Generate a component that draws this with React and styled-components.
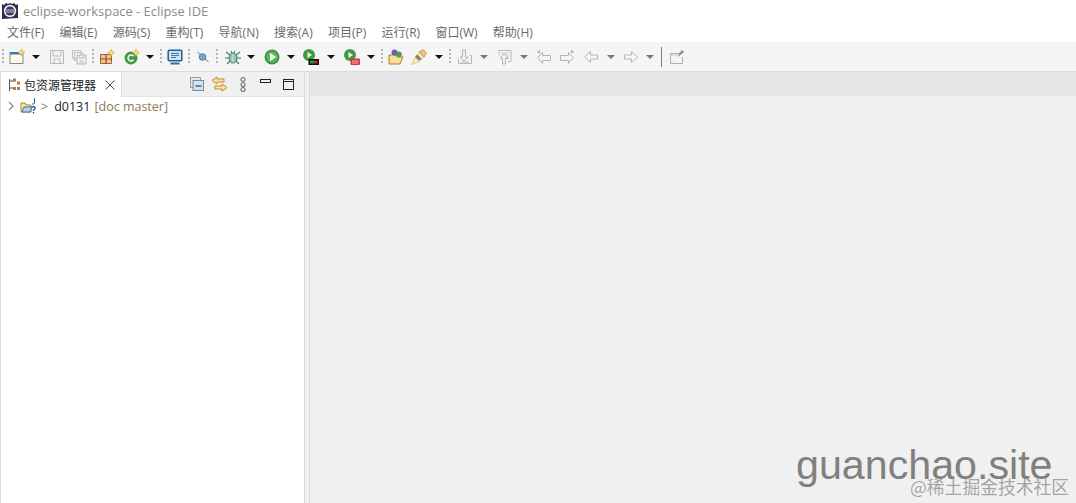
import React from 'react';
import styled, { createGlobalStyle } from 'styled-components';

const GlobalStyle = createGlobalStyle`
  html, body { margin: 0; padding: 0; height: 100%; overflow: hidden; background: #f0f0f0; }
  #root { height: 100%; }
`;

const Window = styled.div`
  position: relative;
  width: 1076px;
  height: 503px;
  display: flex;
  flex-flow: column;
  overflow: hidden;
  font-family: "Open Sans", "Noto Sans CJK SC", sans-serif;
  font-size: 12px;
`;

const TitleBar = styled.div`
  height: 22px;
  background: #fff;
  display: flex;
  align-items: center;
  padding-left: 2px;
  gap: 5px;
  color: #8a8a8a;
  font-size: 12.9px;
`;

const MenuBar = styled.div`
  height: 20px;
  box-sizing: border-box;
  background: #fff;
  display: flex;
  align-items: center;
  padding-left: 7px;
  gap: 15.3px;
  color: #6a6a6a;
  font-family: "Open Sans", "Noto Sans CJK SC", sans-serif;
`;

const Toolbar = styled.div`
  height: 30px;
  padding-top: 1px;
  box-sizing: border-box;
  background: #f5f5f5;
  border-bottom: 1px solid #dcdcdc;
  display: flex;
  align-items: center;
`;

const Slot = styled.div`
  flex: none;
  width: ${p => p.$w}px;
  margin-left: ${p => p.$ml}px;
  display: flex;
  justify-content: center;
  align-items: center;
`;

const Grip = styled.div`
  width: 2px;
  height: 16px;
  background: repeating-linear-gradient(to bottom, #b4b4b4 0 2px, transparent 2px 4px);
`;

const Separator = styled.div`
  width: 1px;
  height: 20px;
  background: #808080;
`;

const Caret = styled.div`
  width: 0;
  height: 0;
  border-left: 4px solid transparent;
  border-right: 4px solid transparent;
  border-top: 4px solid ${p => (p.$dim ? '#777' : '#111')};
`;

const Workbench = styled.div`
  flex: 1;
  display: flex;
  min-height: 0;
`;

const LeftPane = styled.div`
  width: 305px;
  box-sizing: border-box;
  background: #fff;
  border-left: 1px solid #d8d8d8;
  border-right: 1px solid #d8d8d8;
  display: flex;
  flex-flow: column;
`;

const PaneHeader = styled.div`
  height: 25px;
  box-sizing: border-box;
  background: #f0f0f0;
  border-bottom: 1px solid #e4e4e4;
  display: flex;
`;

const Tab = styled.div`
  width: 121px;
  height: 25px;
  box-sizing: border-box;
  background: #fff;
  border-right: 1px solid #dcdcdc;
  display: flex;
  align-items: center;
  padding-left: 7px;
  color: #222;
  font-family: "Noto Sans CJK SC", sans-serif;
`;

const TabLabel = styled.span`
  margin-left: 4px;
  margin-right: 9px;
`;

const PaneTools = styled.div`
  flex: 1;
  display: flex;
  align-items: center;
  padding-left: 67px;
`;

const PaneTool = styled.div`
  width: ${p => p.$w}px;
  display: flex;
  justify-content: center;
  margin-top: ${p => p.$up ? -5 : 0}px;
`;

const TreeRow = styled.div`
  height: 18px;
  display: flex;
  align-items: center;
  padding-left: 6px;
  font-size: 12.5px;
`;

const TreeIcon = styled.span`
  display: flex;
  margin-left: 5px;
`;

const Decorator = styled.span`
  color: #8a7a4e;
  margin-left: 4px;
`;

const Prefix = styled.span`
  color: #8a7a4e;
  margin: 0 6px 0 4px;
`;

const Project = styled.span`
  color: #222;
`;

const Gutter = styled.div`
  width: 4px;
  background: #f0f0f0;
`;

const EditorArea = styled.div`
  flex: 1;
  display: flex;
  flex-flow: column;
  background: #f0f0f0;
  border-left: 1px solid #dcdcdc;
`;

const EditorHeader = styled.div`
  height: 24px;
  background: #e6e6e6;
`;

const SiteMark = styled.div`
  position: absolute;
  left: 796px;
  top: 441px;
  font-family: "Liberation Sans", sans-serif;
  font-size: 41.2px;
  line-height: 48px;
  color: #808080;
`;

const JuejinMark = styled.div`
  position: absolute;
  left: 910px;
  top: 475px;
  font-family: "Noto Sans CJK SC", sans-serif;
  font-size: 17.8px;
  line-height: 22px;
  color: rgba(130, 130, 130, 0.7);
`;

const S = ({ children, size = 16 }) => (
  <svg width={size} height={size} viewBox="0 0 16 16" fill="none">{children}</svg>
);

const Star = ({ x, y, c = '#f8de7c' }) => (
  <path d={`M${x} ${y - 3.5}l1.2 2.3 2.3 1.2-2.3 1.2-1.2 2.3-1.2-2.3-2.3-1.2 2.3-1.2z`} fill={c} stroke="#c9a227" strokeWidth=".6" />
);

const NewIcon = () => (
  <S>
    <rect x="1" y="3.5" width="13" height="11" fill="#fffbe8" stroke="#7d8a9a" />
    <rect x="1" y="3" width="13" height="2.5" fill="#3f78b5" />
    <Star x={12.5} y={3.5} />
  </S>
);
const SaveIcon = () => (
  <S>
    <path d="M1.5 1.5h13v13h-13z" fill="#f2f2f2" stroke="#b8b8b8" />
    <path d="M4 2v5h8V2M5 14v-4h6v4" stroke="#bcbcbc" />
  </S>
);
const SaveAllIcon = () => (
  <S>
    <path d="M1.5 1.5h8v8h-8zM3.5 3.5h8v8h-8z" fill="#f2f2f2" stroke="#c0c0c0" />
    <path d="M6 6h9v9H6z" fill="#f2f2f2" stroke="#b8b8b8" />
    <path d="M8 6v3h5V6M9 15v-3h3v3" stroke="#bcbcbc" />
  </S>
);
const PackageIcon = () => (
  <S>
    <path d="M1.5 5.5h11v9h-11z" fill="#edc79a" stroke="#a8642c" />
    <path d="M7 5v10M1 10h12" stroke="#8a4f20" strokeWidth="1.2" />
    <Star x={12} y={3.8} />
  </S>
);
const NewClassIcon = () => (
  <S>
    <circle cx="7" cy="9" r="6.5" fill="#3f9a45" />
    <path d="M9.5 7.2a3 3 0 1 0 0 3.6" stroke="#fff" strokeWidth="1.6" />
    <Star x={12} y={3.8} />
  </S>
);
const MonitorIcon = () => (
  <S>
    <rect x="1.2" y="1.2" width="13.6" height="10.6" rx="1" fill="#cfe2f2" stroke="#24608f" strokeWidth="1.5" />
    <path d="M4 4.5h8M4 6.5h8M4 8.5h5" stroke="#3d7cab" />
    <path d="M3.5 14.5h9" stroke="#2f6fa8" strokeWidth="2" />
  </S>
);
const SearchIcon = () => (
  <S>
    <path d="M2.5 3l11 10" stroke="#9aa7b3" strokeWidth="1.2" />
    <circle cx="7.5" cy="8" r="3.3" fill="#7ea6c8" stroke="#4f7aa3" />
  </S>
);
const BugIcon = () => (
  <S>
    <path d="M1 3l4 3M15 3l-4 3M0 9h4M16 9h-4M2 15l3-3M14 15l-3-3M6 2l1 2M10 2L9 4" stroke="#2f7f80" strokeWidth="1.1" />
    <ellipse cx="8" cy="9" rx="4" ry="5" fill="#9cc29f" stroke="#2f7f80" />
    <path d="M8 5v8" stroke="#e0eee2" />
  </S>
);
const RunIcon = () => (
  <S size={16}>
    <circle cx="8" cy="8" r="7.5" fill="#3c9440" />
    <circle cx="8" cy="8" r="5.8" fill="#5cb45f" />
    <path d="M6 3.8L12.2 8 6 12.2z" fill="#f2fbe8" />
  </S>
);
const CoverageIcon = () => (
  <S>
    <circle cx="6" cy="6" r="6" fill="#3f9a45" />
    <path d="M4.5 3L9 6 4.5 9z" fill="#f2fbe8" />
    <rect x="5.5" y="10" width="10.5" height="6" fill="#111" />
    <rect x="7" y="11.5" width="4" height="3" fill="#1fa02a" />
    <rect x="11" y="11.5" width="3.5" height="3" fill="#d0202a" />
  </S>
);
const ExternalIcon = () => (
  <S>
    <circle cx="6" cy="6" r="6" fill="#3f9a45" />
    <path d="M4.5 3L9 6 4.5 9z" fill="#f2fbe8" />
    <rect x="6.5" y="9.5" width="9.5" height="6.5" rx="1.2" fill="#d6333a" />
    <path d="M8 12h6.5M8 14h6.5" stroke="#f6b8ba" />
  </S>
);
const OpenTypeIcon = () => (
  <S>
    <path d="M1 6h9l1 2h4l-3 7H1z" fill="#fbdc9a" stroke="#b07a2a" />
    <circle cx="6.5" cy="3.6" r="3" fill="#6a5cb0" />
    <circle cx="10.8" cy="5.5" r="3" fill="#4a9a4f" />
  </S>
);
const PenIcon = () => (
  <S>
    <path d="M1 15.5l3-7 5-6 5 5-6 5z" fill="#fdeeb8" stroke="#d6b45e" strokeWidth=".7" />
    <path d="M4 8l4 4 2.5-2.5-4-4z" fill="#8a8478" />
    <path d="M8 3l4-2.5 3.5 3.5L13 8z" fill="#eec178" stroke="#b87f30" strokeWidth=".7" />
  </S>
);
const NextAnnotationIcon = () => (
  <S>
    <path d="M5.5 1v7H3l4 4 4-4H8.5V1z" fill="#f4f4f4" stroke="#b4b4b4" />
    <path d="M1.5 9.5v5h13v-8h-2M4 13h8" stroke="#b8b8b8" />
  </S>
);
const PrevAnnotationIcon = () => (
  <S>
    <path d="M2 1.5h12v11h-3M2 1.5v5" stroke="#b8b8b8" />
    <path d="M4 4h8M9 7h3M9 9.5h3" stroke="#c4c4c4" />
    <path d="M5.5 15V9H3l4-4 4 4H8.5v6z" fill="#f4f4f4" stroke="#b4b4b4" />
  </S>
);
const EditLeftIcon = () => (
  <S>
    <path d="M1.5 8.5l5-5v3h8v5h-8v3z" fill="#f4f4f4" stroke="#b4b4b4" />
    <path d="M3 1l.8 3M1 3l3 .6" stroke="#a0a0a0" />
  </S>
);
const EditRightIcon = () => (
  <S>
    <path d="M14.5 8.5l-5-5v3h-8v5h8v3z" fill="#f4f4f4" stroke="#b4b4b4" />
    <path d="M13 1l-.8 3M15 3l-3 .6" stroke="#a0a0a0" />
  </S>
);
const LeftIcon = () => (
  <S><path d="M1.5 8l6-5.5v3.5h7v4h-7v3.5z" fill="#f6f6f6" stroke="#b4b4b4" /></S>
);
const RightIcon = () => (
  <S><path d="M14.5 8l-6-5.5v3.5h-7v4h7v3.5z" fill="#f6f6f6" stroke="#b4b4b4" /></S>
);
const PinIcon = () => (
  <S>
    <path d="M1.5 4.5h10M1.5 4.5v10h12V8" stroke="#b0b0b0" />
    <path d="M1.5 6h9" stroke="#c8c8c8" />
    <path d="M9 8l1.5-4L13 1l2 2-3 2.5z" fill="#8f8f8f" />
  </S>
);

const Logo = () => (
  <svg width="16" height="16" viewBox="0 0 16 16">
    <path d="M0 1l2 1 2-2 2 1 2-1 2 1 2-1 2 2 2-1v14l-16 1z" fill="#2f2a4f" />
    <circle cx="8" cy="8" r="6.2" fill="#e8e8ee" />
    <circle cx="8" cy="8" r="4.6" fill="#3d3763" />
    <path d="M3.5 7h9M3.5 9h9" stroke="#e8e8ee" strokeWidth=".8" />
  </svg>
);

const PackageExplorerIcon = () => (
  <svg width="12" height="16" viewBox="0 0 12 16" fill="none">
    <path d="M1.5 2v12M1.5 4h4M1.5 11h4" stroke="#555" />
    <rect x="5" y="1.5" width="3" height="3" fill="#b6793a" />
    <rect x="9" y="4.5" width="3" height="3" fill="#b6793a" />
    <rect x="5" y="10" width="3" height="3" fill="#b6793a" />
    <rect x="9" y="10" width="3" height="3" fill="#b6793a" />
  </svg>
);

const CloseIcon = () => (
  <svg width="10" height="10" viewBox="0 0 10 10" fill="none">
    <path d="M.5.5l9 9M9.5.5l-9 9" stroke="#444" />
  </svg>
);

const CollapseIcon = () => (
  <S>
    <rect x="1.5" y="1.5" width="10" height="10" fill="#e2e8ee" stroke="#8fa3b5" />
    <rect x="4" y="4.5" width="10.5" height="10" fill="#d6e2ec" stroke="#6f8ba3" />
    <path d="M6.5 10h6" stroke="#2f5f8f" strokeWidth="1.4" />
  </S>
);
const LinkIcon = () => (
  <svg width="17" height="16" viewBox="0 0 17 16" fill="none">
    <path d="M6 1L1 4.5 6 8V6h7V3H6z" fill="#fbe3a4" stroke="#c08a2a" />
    <path d="M11 8l5 3.5-5 3.5v-2H4v-3h7z" fill="#fbe3a4" stroke="#c08a2a" />
  </svg>
);
const ChainIcon = () => (
  <svg width="6" height="15" viewBox="0 0 6 15" fill="none" stroke="#777" strokeWidth="1.2">
    <circle cx="3" cy="2.5" r="2" />
    <circle cx="3" cy="7.5" r="2" />
    <circle cx="3" cy="12.5" r="2" />
  </svg>
);
const MinimizeIcon = () => (
  <svg width="11" height="5" viewBox="0 0 11 5" fill="none">
    <rect x=".5" y=".5" width="10" height="3" stroke="#222" />
  </svg>
);
const MaximizeIcon = () => (
  <svg width="11" height="11" viewBox="0 0 11 11" fill="none">
    <rect x=".5" y=".5" width="10" height="10" stroke="#222" />
    <path d="M0 2.5h11" stroke="#222" />
  </svg>
);

const Chevron = () => (
  <svg width="8" height="10" viewBox="0 0 8 10" fill="none">
    <path d="M2 1l4 4-4 4" stroke="#8a8a8a" strokeWidth="1.3" />
  </svg>
);

const ProjectIcon = () => (
  <svg width="17" height="16" viewBox="0 0 17 16" fill="none">
    <path d="M1 5h4l1 2h5v7H1z" fill="#fbe3a4" stroke="#a88038" />
    <path d="M2 14l2-5h8l-2 5z" fill="#b9d2ea" stroke="#4a7098" />
    <path d="M14.5 0v5q0 1.5-2.5 1" stroke="#2f5f8f" />
    <path d="M12 9.5q1.8-1.6 3 0 .5 1.4-1.5 2.5v1M13.5 14v1.5" stroke="#24508f" strokeWidth="1.3" />
  </svg>
);

const Dd = ({ dim }) => <Caret $dim={dim} />;
const G = () => <Grip />;
const Sep = () => <Separator />;

const tools = [
  [3, G], [17, NewIcon], [36, Dd], [57, SaveIcon], [79, SaveAllIcon], [93, G], [107, PackageIcon],
  [132, NewClassIcon], [150, Dd], [161, G], [175, MonitorIcon], [189, G], [203, SearchIcon], [217, G],
  [233, BugIcon], [251, Dd], [272, RunIcon], [291, Dd], [311, CoverageIcon], [331, Dd], [352, ExternalIcon],
  [371, Dd], [382, G], [396, OpenTypeIcon], [419, PenIcon], [439, Dd], [450, G], [465, NextAnnotationIcon],
  [484, Dd, true], [505, PrevAnnotationIcon], [524, Dd, true], [544, EditLeftIcon], [567, EditRightIcon],
  [591, LeftIcon], [611, Dd, true], [631, RightIcon], [650, Dd, true], [661, Sep], [677, PinIcon],
];

const menus = ['文件(F)', '编辑(E)', '源码(S)', '重构(T)', '导航(N)', '搜索(A)', '项目(P)', '运行(R)', '窗口(W)', '帮助(H)'];

const slotWidth = Icon => (Icon === G || Icon === Sep ? 4 : Icon === Dd ? 10 : 16);

const ToolItems = () => {
  let end = 0;
  return tools.map(([center, Icon, dim]) => {
    const w = slotWidth(Icon);
    const ml = center - w / 2 - end;
    end = center + w / 2;
    return (
      <Slot key={center} $w={w} $ml={ml}>
        <Icon dim={dim} />
      </Slot>
    );
  });
};

const App = () => (
  <Window>
    <GlobalStyle />
    <TitleBar>
      <Logo />
      eclipse-workspace - Eclipse IDE
    </TitleBar>
    <MenuBar>
      {menus.map(m => <span key={m}>{m}</span>)}
    </MenuBar>
    <Toolbar>
      <ToolItems />
    </Toolbar>
    <Workbench>
      <LeftPane>
        <PaneHeader>
          <Tab>
            <PackageExplorerIcon />
            <TabLabel>包资源管理器</TabLabel>
            <CloseIcon />
          </Tab>
          <PaneTools>
            <PaneTool $w={16}><CollapseIcon /></PaneTool>
            <PaneTool $w={28}><LinkIcon /></PaneTool>
            <PaneTool $w={20}><ChainIcon /></PaneTool>
            <PaneTool $w={24} $up><MinimizeIcon /></PaneTool>
            <PaneTool $w={22}><MaximizeIcon /></PaneTool>
          </PaneTools>
        </PaneHeader>
        <TreeRow>
          <Chevron />
          <TreeIcon><ProjectIcon /></TreeIcon>
          <Prefix>&gt;</Prefix>
          <Project>d0131</Project>
          <Decorator>[doc master]</Decorator>
        </TreeRow>
      </LeftPane>
      <Gutter />
      <EditorArea>
        <EditorHeader />
      </EditorArea>
    </Workbench>
    <SiteMark>guanchao.site</SiteMark>
    <JuejinMark>@稀土掘金技术社区</JuejinMark>
  </Window>
);

export default App;
